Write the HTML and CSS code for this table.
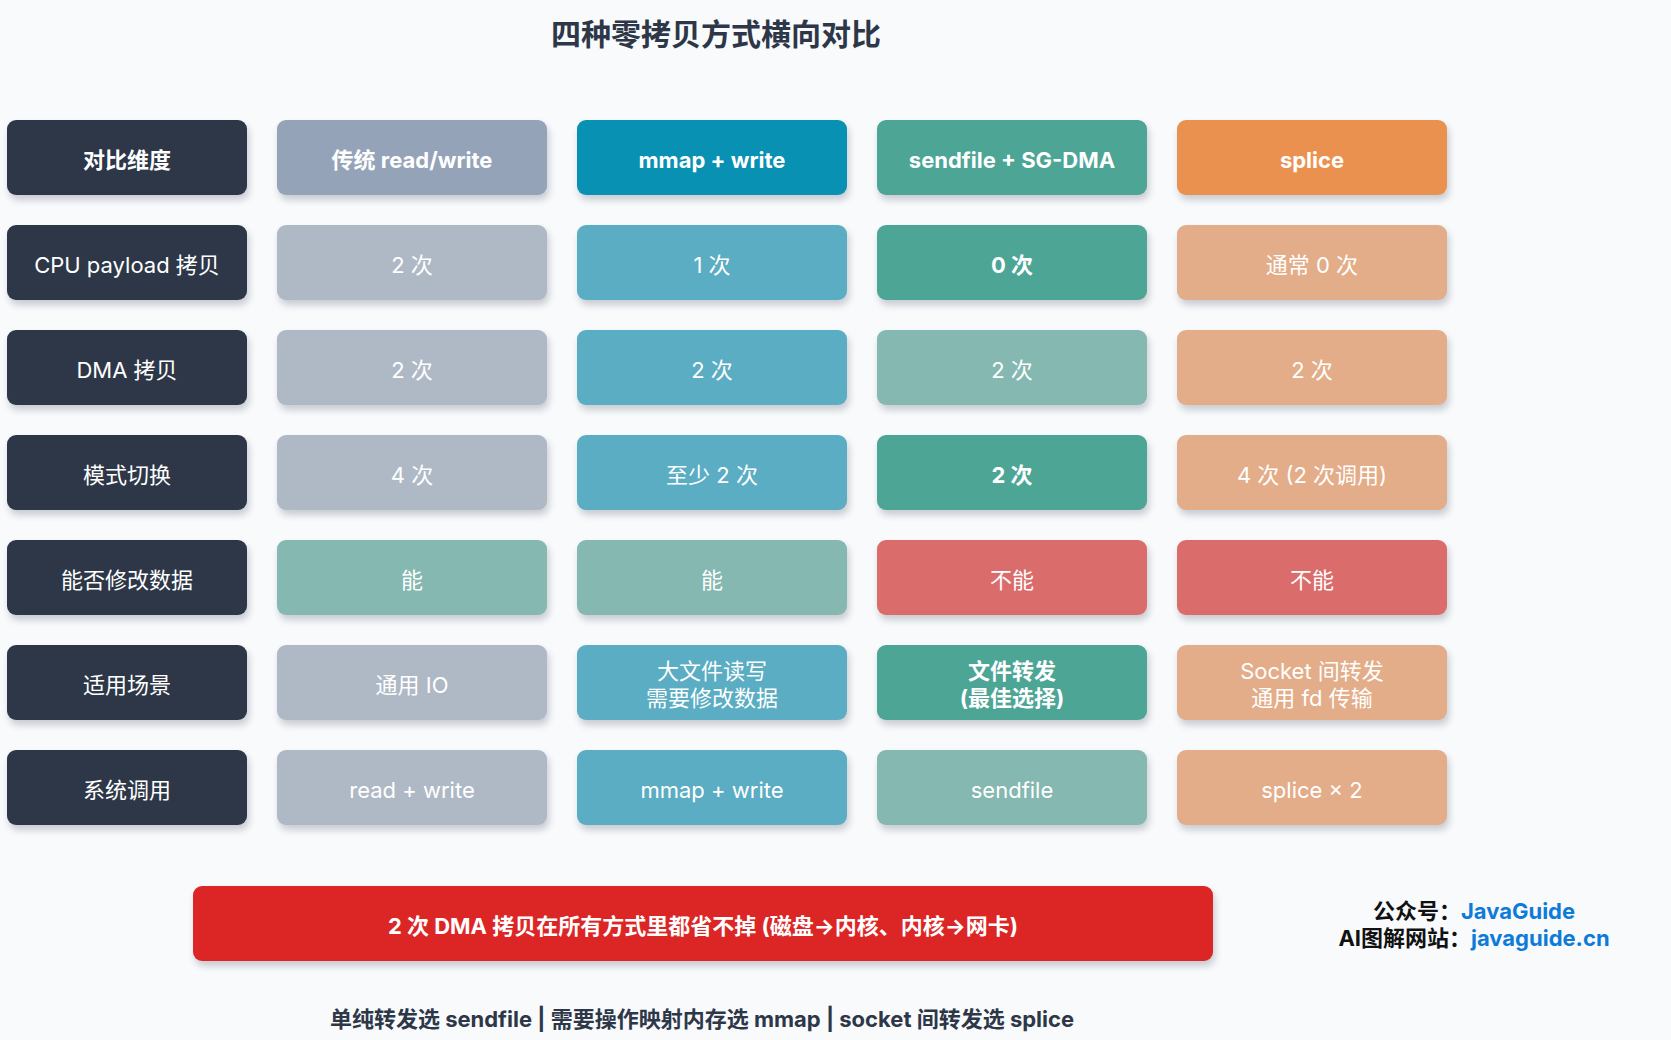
FILE: index.html
```html
<!DOCTYPE html>
<html lang="zh-CN">
<head>
<meta charset="utf-8">
<title>四种零拷贝方式横向对比</title>
<link rel="stylesheet" href="styles.css">
</head>
<body>
<main class="canvas">
  <h1 class="title">四种零拷贝方式横向对比</h1>

  <section class="grid">
    <div class="cell dim head">对比维度</div>
    <div class="cell h-slate">传统 read/write</div>
    <div class="cell h-cyan">mmap + write</div>
    <div class="cell h-teal">sendfile + SG-DMA</div>
    <div class="cell h-orange">splice</div>

    <div class="cell dim">CPU payload 拷贝</div>
    <div class="cell slate">2 次</div>
    <div class="cell cyan">1 次</div>
    <div class="cell teal strong">0 次</div>
    <div class="cell orange">通常 0 次</div>

    <div class="cell dim">DMA 拷贝</div>
    <div class="cell slate">2 次</div>
    <div class="cell cyan">2 次</div>
    <div class="cell teal-light">2 次</div>
    <div class="cell orange">2 次</div>

    <div class="cell dim">模式切换</div>
    <div class="cell slate">4 次</div>
    <div class="cell cyan">至少 2 次</div>
    <div class="cell teal strong">2 次</div>
    <div class="cell orange">4 次 (2 次调用)</div>

    <div class="cell dim">能否修改数据</div>
    <div class="cell teal-light">能</div>
    <div class="cell teal-light">能</div>
    <div class="cell red">不能</div>
    <div class="cell red">不能</div>

    <div class="cell dim">适用场景</div>
    <div class="cell slate">通用 IO</div>
    <div class="cell cyan">大文件读写<br>需要修改数据</div>
    <div class="cell teal strong">文件转发<br>(最佳选择)</div>
    <div class="cell orange">Socket 间转发<br>通用 fd 传输</div>

    <div class="cell dim">系统调用</div>
    <div class="cell slate">read + write</div>
    <div class="cell cyan">mmap + write</div>
    <div class="cell teal-light">sendfile</div>
    <div class="cell orange">splice × 2</div>
  </section>

  <div class="banner">2 次 DMA 拷贝在所有方式里都省不掉 (磁盘→内核、内核→网卡)</div>

  <p class="summary">单纯转发选 sendfile | 需要操作映射内存选 mmap | socket 间转发选 splice</p>

  <div class="watermark">
    <div>公众号：<span class="link">JavaGuide</span></div>
    <div>AI图解网站：<span class="link">javaguide.cn</span></div>
  </div>
</main>
</body>
</html>
```

FILE: styles.css
```css
html, body {
  margin: 0;
  padding: 0;
  background: #f8fafc;
}

body {
  font-family: "Inter", "Noto Sans CJK SC", sans-serif;
  color: #2d3748;
}

.canvas {
  position: relative;
  width: 1671px;
  height: 1040px;
  overflow: hidden;
  display: flex;
  flex-direction: column;
  align-items: flex-start;
}

.title {
  margin: 14px 0 0 0;
  width: 1432px;
  height: 40px;
  line-height: 40px;
  text-align: center;
  font-size: 30px;
  font-weight: 700;
  color: #2d3748;
}

.grid {
  margin: 66px 0 0 7px;
  display: grid;
  grid-template-columns: 240px repeat(4, 270px);
  grid-auto-rows: 75px;
  column-gap: 30px;
  row-gap: 30px;
}

.cell {
  box-sizing: border-box;
  padding-top: 5px;
  display: flex;
  align-items: center;
  justify-content: center;
  text-align: center;
  border-radius: 9px;
  font-size: 22px;
  line-height: 27px;
  color: #ffffff;
  font-weight: 400;
  box-shadow: 2px 5px 7px rgba(30, 41, 59, 0.22);
}

.dim {
  background: #2d3748;
}

.dim.head { font-weight: 700; }

.h-slate { background: #94a3b8; font-weight: 700; }
.h-cyan { background: #0891b2; font-weight: 700; }
.h-teal { background: #4ca595; font-weight: 700; }
.h-orange { background: #ea9150; font-weight: 700; }

.slate { background: #afb9c6; }
.cyan { background: #5aadc2; }
.teal { background: #4ca595; }
.teal-light { background: #84b8b0; }
.orange { background: #e3ad89; }
.red { background: #db6c6c; }

.strong { font-weight: 700; }

.banner {
  box-sizing: border-box;
  margin: 61px 0 0 193px;
  width: 1020px;
  height: 75px;
  border-radius: 9px;
  background: #dc2626;
  color: #ffffff;
  font-size: 22px;
  font-weight: 700;
  display: flex;
  align-items: center;
  justify-content: center;
  box-shadow: 2px 5px 7px rgba(30, 41, 59, 0.22);
}

.summary {
  margin: 43px 0 0 0;
  width: 1404px;
  line-height: 30px;
  text-align: center;
  font-size: 22px;
  font-weight: 700;
  color: #2d3748;
}

.watermark {
  position: absolute;
  left: 1324px;
  top: 898px;
  width: 300px;
  text-align: center;
  font-size: 22px;
  line-height: 27px;
  font-weight: 700;
  color: #111111;
}

.link {
  color: #0e7bd8;
}
```
